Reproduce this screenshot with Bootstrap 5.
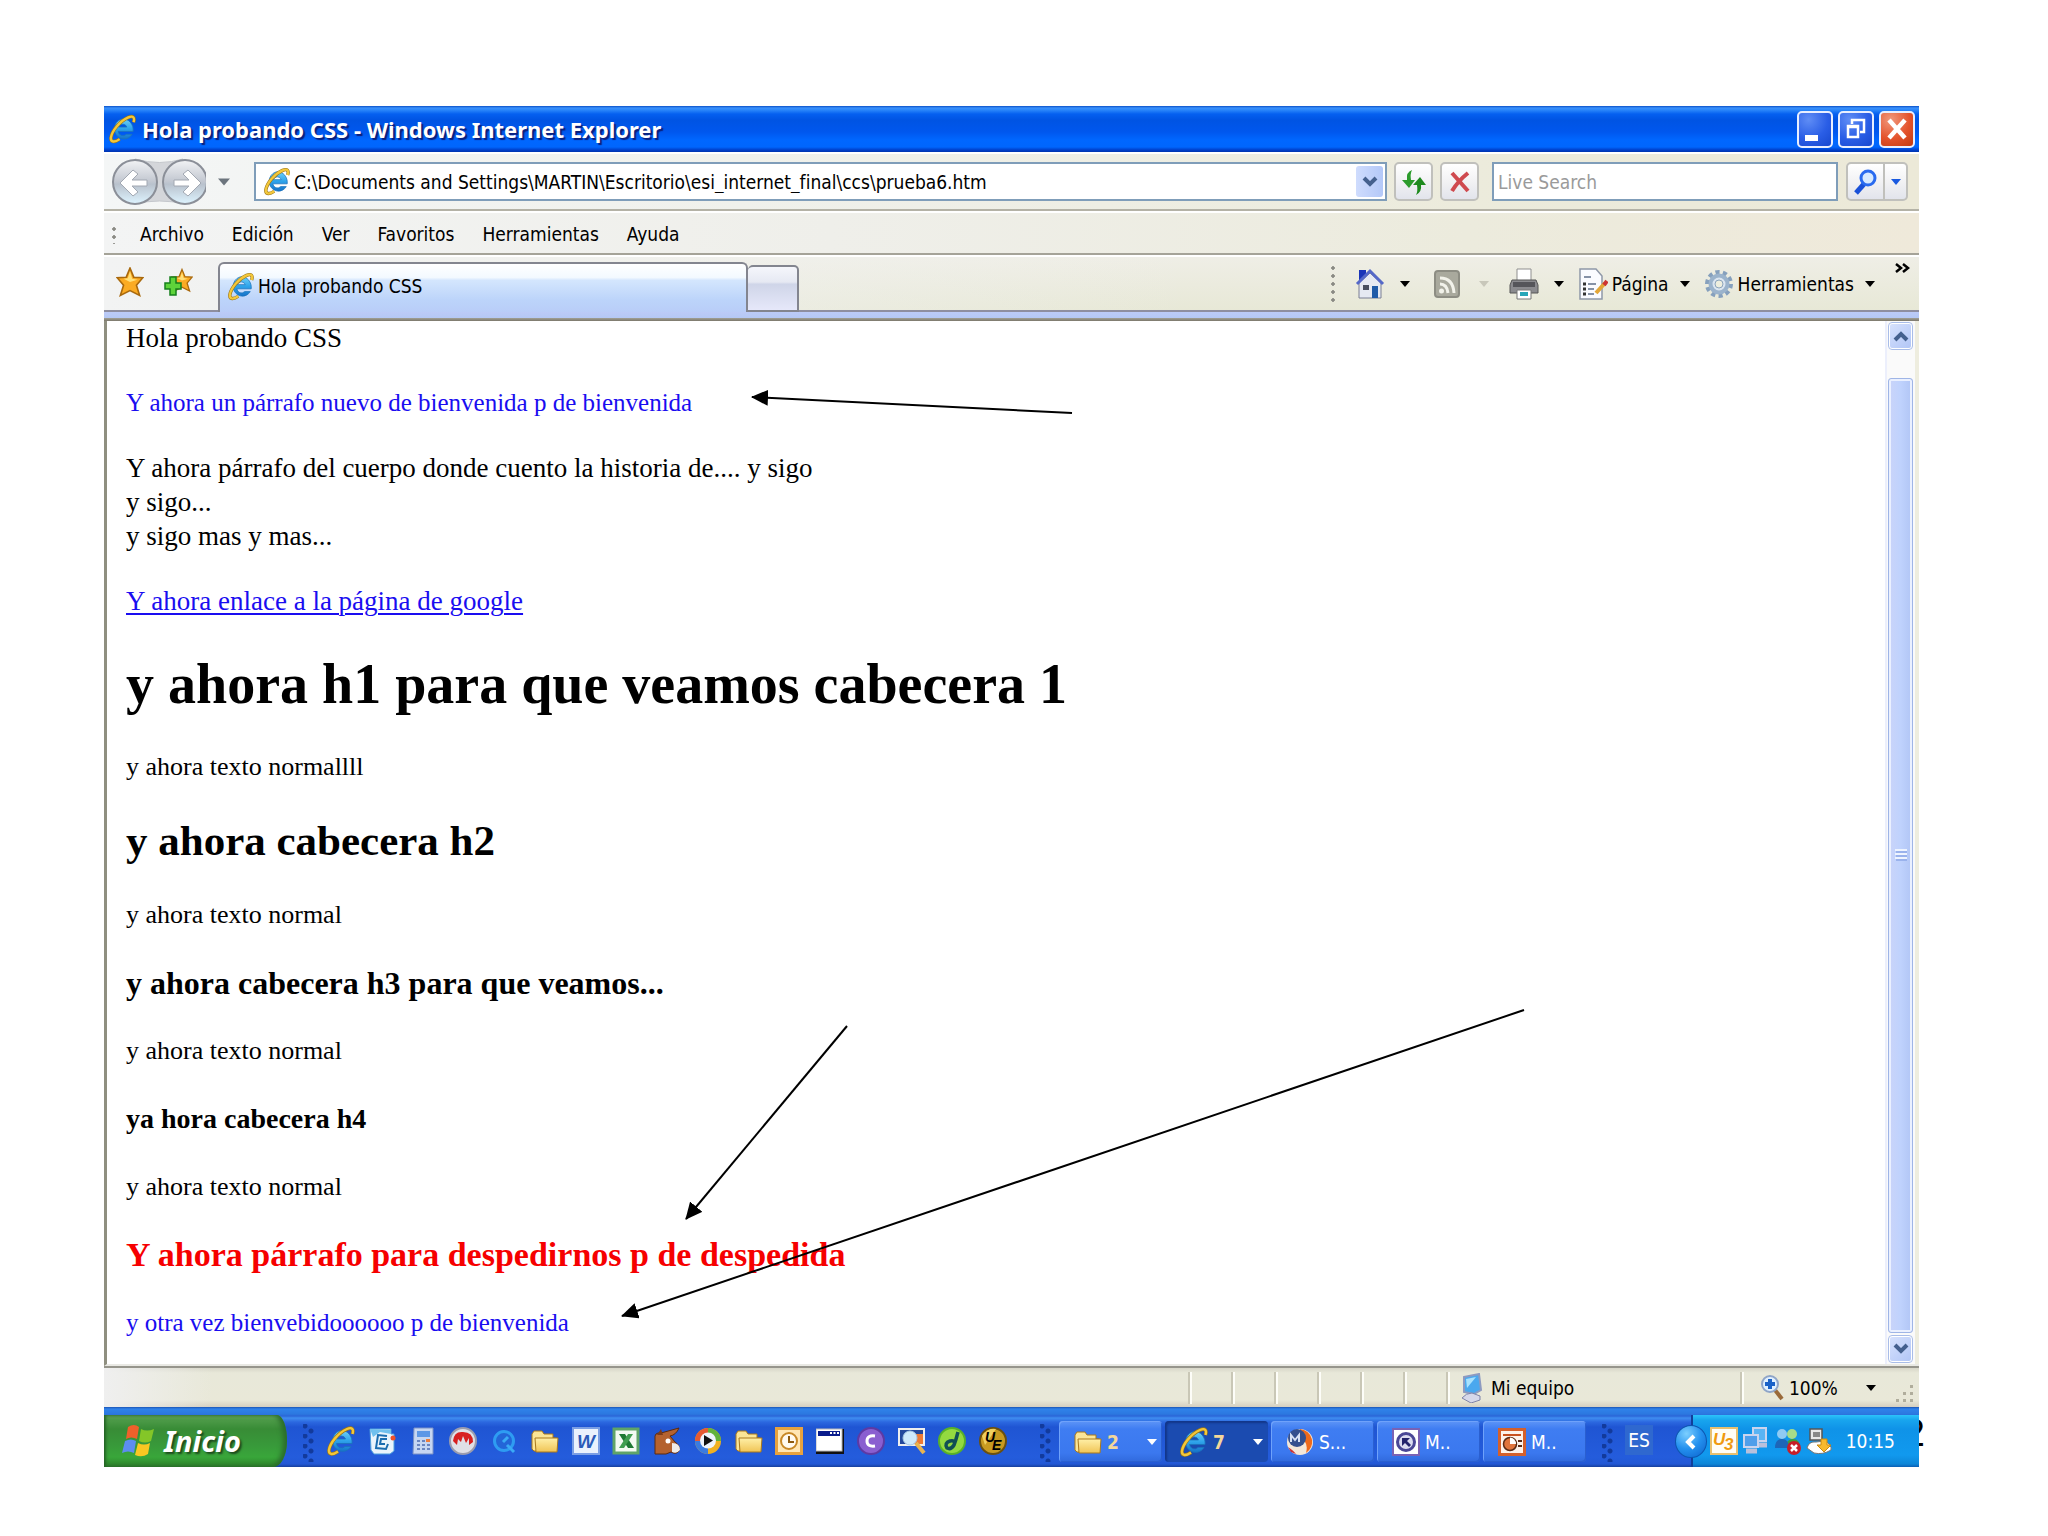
<!DOCTYPE html>
<html lang="es">
<head>
<meta charset="utf-8">
<meta name="viewport" content="width=device-width, initial-scale=1">
<title>Hola probando CSS</title>
<link href="https://cdn.jsdelivr.net/npm/bootstrap@5.3.0/dist/css/bootstrap.min.css" rel="stylesheet">
<style>
:root{--ui:"DejaVu Sans Condensed","DejaVu Sans",sans-serif;--serif:"Liberation Serif",serif}
body{background:#fff;color:#000;font:19px/24px var(--ui);padding:106px 129px 70px 104px;min-width:1400px}
button{font:inherit;color:inherit;padding:0;border:0;background:none;display:inline-flex;align-items:center;justify-content:center}
svg{display:block;flex:none}
.slide{position:relative}
.slide-no{position:absolute;right:-6px;bottom:12px;font:38px/44px "Liberation Sans",sans-serif}
.win{position:relative;background:#fff}
.titlebar{height:46px;padding:0 4px 0 5px;gap:6px;color:#fff;font:bold 22px/30px "Noto Sans",sans-serif;text-shadow:2px 2px 1px #0a1f7c;background:linear-gradient(#0a50c8 0,#3a90fb 2px,#2a86fa 4px,#0560f0 8px,#0054e3 14px,#0057ee 26px,#0067ff 34px,#0066fd 41px,#003fc9 44px,#0034b0 46px)}
.titlebar h1{font:inherit;margin:0}
.cap-btns{gap:5px}
.cap-btn{width:36px;height:37px;border:2px solid #e8efff;border-radius:5px;background:radial-gradient(circle at 30% 20%,#5f8df5,#2a5ee6 55%,#1748cf)}
.cap-btn.shut{background:radial-gradient(circle at 30% 20%,#f0987c,#e4532c 55%,#c23a10)}
.bar-addr{height:59px;padding:0 11px 0 7px;background:linear-gradient(90deg,#f4f6f6,#f0f1ec 35%,#ecebdc 75%,#ece9d8);border-top:2px solid #fff;border-bottom:2px solid #b4b2a6}
.nav-arrows{width:95px}
.recent{margin:0 24px 0 12px}
.fld{height:39px;border:2px solid #7f9db9;background:#fff}
.fld input{border:0;outline:0;background:transparent;font:inherit;color:#000;padding:0;min-width:0;height:32px}
.fld input::placeholder{color:#9a9a9a;opacity:1}
.drop{width:27px;height:31px;margin-right:2px;background:linear-gradient(90deg,#cfdcfd,#b3c8f8);border-radius:3px}
.tool-btn{height:39px;width:39px;border:2px solid #c0c0bc;border-radius:5px;background:linear-gradient(#fff,#f2f2f4 50%,#e2e4ec)}
.tool-btn.slim{width:23px}
.addr-acts{gap:7px;margin:0 13px 0 7px}
.find-box{width:346px}
.bar-menu{height:44px;padding:2px 0 0 8px;border-top:2px solid #fff;border-bottom:2px solid #a5a398;background:linear-gradient(90deg,#f3f4f4,#efefea 40%,#ecebdd 75%,#efe9da)}
.bar-menu a{color:#000;text-decoration:none;margin-right:28px}
.grip-dots{width:4px;background:radial-gradient(circle,#8a8a84 1.5px,transparent 2px) 0 0/4px 8px}
.bar-tabs{height:57px;border-top:2px solid #fff;background:linear-gradient(90deg,#f2f3f3,rgba(236,236,224,0) 60%),linear-gradient(#efeee6,#e7e8d6)}
.bar-tabs>.rule{border-bottom:2px solid #8e8ea0}
.favs{width:114px;gap:20px}
.tab-on{width:530px;margin-top:5px;padding:0 0 4px 8px;border:2px solid #83858f;border-bottom:0;border-radius:6px 6px 0 0;background:linear-gradient(#fff 0,#f3f9ff 28%,#d4e6fd 34%,#bcd4fa 75%,#b9cdf8)}
.tab-new{width:51px;margin-top:8px;border:2px solid #83858f;border-left:0;border-radius:5px 5px 0 0;background:linear-gradient(#f5f6fb 0,#e6e9f3 35%,#cfd5e8 40%,#e6e8fa)}
.cmds{gap:20px}
.cmds button{gap:15px}
.cmds .with-text{gap:11px;margin-left:-6px}
.band{height:9px;background:linear-gradient(#bccbf8,#b4c8f4 70%,#9c9a90 72%,#7b776a)}
.view{border-left:3px solid #8f8f80;border-bottom:2px solid #e9e9e4;position:relative;overflow:hidden}
.doc{padding:0 14px 24px 19px;font:26px/34px var(--serif)}
.doc>*{margin:0 0 31px;font-family:var(--serif);font-weight:400}
.doc>:last-child{margin-bottom:0}
.doc .t-body{font-size:27px}
.doc .t-hi{font-size:25px;color:#1a0df0}
.doc a{color:#1a0df0;text-decoration-thickness:2px;text-underline-offset:3px}
.doc h2{font-size:56px;line-height:70px;font-weight:700}
.doc h3{font-size:43px;line-height:52px;font-weight:700}
.doc h4{font-size:32px;line-height:40px;font-weight:700}
.doc h5{font-size:28px;line-height:40px;font-weight:700}
.doc .t-bye{font-size:34px;line-height:40px;font-weight:700;color:#f60000}
.marks{position:absolute;left:-3px;top:0;pointer-events:none}
.sbar{width:34px;padding:1px 6px 1px 1px;border-left:2px solid #eceffc;background:#fafafa;box-shadow:inset -4px 0 #eeeddf}
.sbtn{height:28px;border:2px solid #fff;outline:1px solid #a9bde8;outline-offset:-1px;border-radius:4px;background:linear-gradient(135deg,#d6e1fd,#b2c6f6)}
.thumb{margin:28px 0 2px;border:1px solid #9fb5e6;border-radius:3px;box-shadow:inset 0 0 0 2px #eaf0ff;background:linear-gradient(90deg,#cad4f9,#bfd2fd 50%,#b1c5f5)}
.statusbar{height:41px;border-top:2px solid #96958c;padding:4px 4px 3px 0;background:linear-gradient(90deg,#efefef,rgba(232,232,218,0) 6%),linear-gradient(#d7d6c8,#e8e8d9 5px,#e9e8d8 32px,#d5cfc0)}
.seg{width:42px;border-left:2px solid #c9c7b6;box-shadow:inset 2px 0 #fdfdf8;margin-right:1px}
.seg.zone{width:293px;padding-left:13px;gap:8px}
.seg.zoom{width:154px;padding-left:19px;gap:4px}
.taskbar{height:60px;color:#fff;background:linear-gradient(#1c55b5 0,#2f82ea 2px,#2c78e0 7px,#2b66d8 9px,#3f8df0 11px,#2c68e0 15px,#1f55d3 20px,#245cdc 50px,#2258d5 57px,#173f9c 60px)}
.start{width:183px;margin-top:8px;padding-left:17px;gap:9px;justify-content:flex-start;font:italic bold 29px/30px "Noto Sans",sans-serif;text-shadow:2px 2px 2px #1d4a1d;border-radius:0 10px 14px 0/0 26px 26px 0;background:linear-gradient(#6cab66 0,#4d9a48 5px,#388c36 14px,#38993a 30px,#39a63a 42px,#2b8029 52px);box-shadow:inset -4px 0 5px #2b6d2c,inset 2px 0 3px #256326}
.dots{width:11px;height:38px;margin-top:17px;background:radial-gradient(circle at 2px 2px,#123a9c 2px,transparent 3px) 0 0/11px 10px,radial-gradient(circle at 8px 7px,#123a9c 2px,transparent 3px) 0 0/11px 10px}
.quick{width:680px;margin:0 33px 0 13px;padding-top:7px}
.tasks{gap:3px}
.task{width:103px;height:41px;margin-top:14px;padding:0 5px 0 15px;justify-content:flex-start;gap:5px;border-radius:4px;background:linear-gradient(#5e95f7,#3f7df2 8px,#3b78ef 32px,#3069dc);box-shadow:inset 1px 1px #6fa2fa,inset -1px -1px #2a5fd0}
.task.on{background:#1b4bb0;box-shadow:inset 2px 2px 2px #12368a}
.task b{color:#f3d79a;font-weight:700}
.lang{width:28px;height:30px;margin:18px 0 0 4px;background:#2f68cf}
.tray{width:228px;margin-top:8px;padding:0 24px 0 17px;border-left:2px solid #123f9a;background:linear-gradient(#2cc3fa 0,#18a5ee 5px,#0f93e8 14px,#1199ee 40px,#0d86d8 49px,#0b5fb4)}
.chev{position:absolute;left:-18px;top:10px;width:32px;height:33px;border-radius:50%;border:1px solid #0d55b0;background:radial-gradient(circle at 35% 25%,#7ccfff,#2390ee 50%,#0c62cc)}
</style>
<script src="https://cdn.jsdelivr.net/npm/bootstrap@5.3.0/dist/js/bootstrap.bundle.min.js"></script>
</head>
<body>
<svg width="0" height="0" class="position-absolute" aria-hidden="true">
<defs>
<linearGradient id="gBlue" x1="0" y1="0" x2="0" y2="1"><stop offset="0" stop-color="#6fd0f8"/><stop offset=".5" stop-color="#2ea3ea"/><stop offset="1" stop-color="#1673c8"/></linearGradient>
<linearGradient id="gGold" x1="0" y1="0" x2="0" y2="1"><stop offset="0" stop-color="#fff0a8"/><stop offset="1" stop-color="#f0c455"/></linearGradient>
<linearGradient id="gNav" x1="0" y1="0" x2="0" y2="1"><stop offset="0" stop-color="#f2f3f5"/><stop offset=".48" stop-color="#c3c8d1"/><stop offset=".55" stop-color="#b9c2cd"/><stop offset="1" stop-color="#def4ff"/></linearGradient>
<marker id="head" markerUnits="userSpaceOnUse" markerWidth="18" markerHeight="18" refX="16" refY="8" orient="auto"><path d="M0 0L17 8L0 16Z"/></marker>
<symbol id="ie" viewBox="0 0 28 30">
<path d="M14 4.500A10 10.500 0 1 0 24 20.500H18A5 5 0 0 1 9.500 17.500H25A10.500 11.500 0 0 0 14 4.500ZM10 13A4.500 4.500 0 0 1 18.500 13Z" fill="url(#gBlue)" stroke="#1a72bb" stroke-width=".8"/>
<path d="M25.500 8C27 3 25 .8 20 3C11 7 3 17 2 24C1.500 29 6 29 11 25.500" fill="none" stroke="#9a7416" stroke-width="3.600"/>
<path d="M25.500 8C27 3 25 .8 20 3C11 7 3 17 2 24C1.500 29 6 29 11 25.500" fill="none" stroke="#f3c73a" stroke-width="2.400"/>
</symbol>
<symbol id="folder" viewBox="0 0 28 28"><path d="M1 22V7L3 4h8l2 3h9v4h3v13H3Z" fill="#fbe596" stroke="#a9781c"/><path d="M4 11h23l-1 14H5Z" fill="url(#gGold)" stroke="#a9781c"/></symbol>
<symbol id="car" viewBox="0 0 10 6"><path d="M0 0h10L5 6Z" fill="currentColor"/></symbol>
<symbol id="star" viewBox="0 0 26 28"><path d="M13 1l3.500 8.500L25 10l-6 7 3 9.500-9-4.500-9 4.500L7 17 1 10l8.500-.5Z" fill="#fbab23" stroke="#a9690d" stroke-width="1.500"/><path d="M13 4l2 7 5 1-7 2-6-3 4-.5Z" fill="#ffe07a"/></symbol>
</defs>
</svg>

<main class="slide">
<div class="slide-no">2</div>
<div class="win">

<header class="titlebar d-flex align-items-center">
<svg width="27" height="32"><use href="#ie"/></svg>
<h1 class="flex-grow-1">Hola probando CSS - Windows Internet Explorer</h1>
<div class="cap-btns d-flex">
<button class="cap-btn" aria-label="Minimizar"><svg width="28" height="28"><path d="M4 20h13v6H4Z" fill="#fff"/></svg></button>
<button class="cap-btn" aria-label="Restaurar"><svg width="28" height="28"><path d="M10 9V5h12v12h-4M9 5h14" fill="none" stroke="#fff" stroke-width="2.500"/><path d="M6 11h10v11H6ZM5 12h12" fill="none" stroke="#fff" stroke-width="2.500"/></svg></button>
<button class="cap-btn shut" aria-label="Cerrar"><svg width="28" height="28"><path d="M6 5L22 23M22 5L6 23" stroke="#fff" stroke-width="4.500"/></svg></button>
</div>
</header>

<div class="bar-addr d-flex align-items-center">
<svg class="nav-arrows" height="50" viewBox="0 0 95 50" role="img" aria-label="Atrás y adelante">
<path d="M24 2Q49 9 72 2L74 47Q48 41 24 47Z" fill="#d4d6da" stroke="#c4c7cc"/>
<g fill="url(#gNav)" stroke="#8b8f98" stroke-width="2"><circle cx="24" cy="25" r="22"/><circle cx="74" cy="25" r="22"/></g>
<g fill="#fff" stroke="#a2a8b2"><path d="M9 26L22 13l5 4-6 6h15v6H21l6 6-5 4Z"/><path d="M90 26L77 13l-5 4 6 6H63v6h15l-6 6 5 4Z"/></g>
</svg>
<button class="recent text-secondary" aria-label="Páginas recientes"><svg width="12" height="8"><use href="#car"/></svg></button>
<div class="fld d-flex align-items-center flex-grow-1 ps-1">
<svg class="ms-1 me-1" width="26" height="31"><use href="#ie"/></svg>
<input class="flex-grow-1" type="text" aria-label="Dirección" value="C:\Documents and Settings\MARTIN\Escritorio\esi_internet_final\ccs\prueba6.htm">
<button class="drop" aria-label="Mostrar direcciones"><svg width="16" height="12"><path d="M2 2l6 6 6-6" fill="none" stroke="#44608e" stroke-width="4"/></svg></button>
</div>
<div class="addr-acts d-flex">
<button class="tool-btn" aria-label="Actualizar"><svg width="28" height="30"><path d="M12 3Q6 5 7 13H2l7 8 6-8h-4Q10 7 12 3Z" fill="#2c9c2c"/><path d="M16 28Q22 25 21 18h5l-6-8-7 8h4Q18 24 16 28Z" fill="#1e8a1e"/></svg></button>
<button class="tool-btn" aria-label="Detener"><svg width="24" height="26"><path d="M4 4L20 22M20 4Q10 12 4 22" fill="none" stroke="#cf4a4f" stroke-width="4"/></svg></button>
</div>
<div class="fld find-box d-flex align-items-center ps-1"><input class="w-100" type="search" aria-label="Buscar" placeholder="Live Search"></div>
<div class="d-flex ms-2">
<button class="tool-btn rounded-end-0" aria-label="Buscar ahora"><svg width="28" height="28"><path d="M12 16L4 25" stroke="#1950d8" stroke-width="5"/><circle cx="16" cy="10" r="7" fill="#d8eaff" stroke="#2a6bef" stroke-width="3"/></svg></button>
<button class="tool-btn slim rounded-start-0 border-start-0" aria-label="Opciones de búsqueda"><svg width="10" height="6" color="#1a5ae0"><use href="#car"/></svg></button>
</div>
</div>

<nav class="bar-menu d-flex align-items-center">
<span class="grip-dots me-4 h-50"></span>
<a href="#">Archivo</a><a href="#">Edición</a><a href="#">Ver</a><a href="#">Favoritos</a><a href="#">Herramientas</a><a href="#">Ayuda</a>
</nav>

<div class="bar-tabs d-flex align-items-stretch">
<div class="favs rule d-flex align-items-center px-2 pb-1">
<button class="ms-1" aria-label="Favoritos"><svg width="28" height="30"><use href="#star"/></svg></button>
<button aria-label="Agregar a favoritos"><svg width="30" height="30"><svg x="7" width="22" height="27"><use href="#star"/></svg><path d="M6 10h6v6h5v6h-5v6H6v-6H1v-6h5Z" fill="#5ed33a" stroke="#16801c" stroke-width="1.500"/></svg></button>
</div>
<button class="tab-on justify-content-start gap-1"><svg width="26" height="31"><use href="#ie"/></svg>Hola probando CSS</button>
<button class="tab-new" aria-label="Nueva ficha"></button>
<div class="cmds rule d-flex align-items-center flex-grow-1 justify-content-end pe-2">
<span class="grip-dots h-75"></span>
<button aria-label="Inicio"><svg width="30" height="32" viewBox="0 0 30 32"><path d="M4 2h7v10H4Z" fill="#1a34b8"/><path d="M4 15L15 5l11 10v15H4Z" fill="#e6e9f2" stroke="#7a7f94"/><path d="M2 16L15 3l13 13" fill="none" stroke="#5568c8" stroke-width="3"/><path d="M17 18h6v12h-6Z" fill="#1f5aa8"/><path d="M8 17h6v5H8Z" fill="#4a4f60"/></svg><svg width="10" height="6"><use href="#car"/></svg></button>
<button aria-label="Fuentes" class="ms-1"><svg class="me-1" width="26" height="28"><rect x="1" y="1" width="24" height="26" rx="3" fill="#a9a99d" stroke="#8d8d83" stroke-width="2"/><path d="M6 8q13 0 14 15M6 14q7 0 8 9" fill="none" stroke="#f2f2ea" stroke-width="3"/><circle cx="7.500" cy="21" r="2.500" fill="#f2f2ea"/></svg><svg width="10" height="6" color="#c8c7ba"><use href="#car"/></svg></button>
<button aria-label="Imprimir"><svg width="30" height="32" viewBox="0 0 30 32"><path d="M8 1h14v12H8Z" fill="#fff" stroke="#8f8f8f"/><path d="M3 12h24l2 5v8H1v-8Z" fill="#8b8b8f" stroke="#555"/><path d="M4 14h22v5H4Z" fill="#55555a"/><path d="M8 22h14v9H8Z" fill="#fff" stroke="#777"/><path d="M11 24h8v4h-8Z" fill="#27a6b8"/></svg><svg width="10" height="6"><use href="#car"/></svg></button>
<button class="with-text"><span class="d-flex align-items-center gap-1"><svg width="30" height="32" viewBox="0 0 30 32"><path d="M2 1h16l6 7v23H2Z" fill="#fafbff" stroke="#8f98a8" stroke-width="1.500"/><path d="M6 9h7M10 16h8M10 21h6M10 26h6" stroke="#8591a6" stroke-width="2"/><path d="M5 16h3M5 21h3M5 26h3" stroke="#333" stroke-width="3"/><path d="M18 25l9-10" stroke="#e3a637" stroke-width="4"/><path d="M26 17l3-4" stroke="#c33" stroke-width="4"/></svg>Página</span><svg width="10" height="6"><use href="#car"/></svg></button>
<button class="with-text"><span class="d-flex align-items-center gap-1"><svg width="30" height="32" viewBox="-15 -16 30 32"><circle r="11.500" fill="none" stroke="#86a0bd" stroke-width="5" stroke-dasharray="4 3.200"/><circle r="8.500" fill="#dbe5f0" stroke="#9bb3cc" stroke-width="4"/><circle r="4" fill="#eeeede" stroke="#8ca4bc"/></svg>Herramientas</span><svg width="10" height="6"><use href="#car"/></svg></button>
<button class="align-self-start mt-1" aria-label="Más"><svg width="16" height="16"><path d="M1 3l5 4-5 4M8 3l5 4-5 4" fill="none" stroke="#000" stroke-width="2.500"/></svg></button>
</div>
</div>
<div class="band"></div>

<div class="view d-flex">
<article class="doc flex-grow-1">
<p class="t-body">Hola probando CSS</p>
<p class="t-hi">Y ahora un párrafo nuevo de bienvenida p de bienvenida</p>
<p class="t-body">Y ahora párrafo del cuerpo donde cuento la historia de.... y sigo<br>y sigo...<br>y sigo mas y mas...</p>
<p class="t-body"><a href="#">Y ahora enlace a la página de google</a></p>
<h2>y ahora h1 para que veamos cabecera 1</h2>
<p>y ahora texto normallll</p>
<h3>y ahora cabecera h2</h3>
<p>y ahora texto normal</p>
<h4>y ahora cabecera h3 para que veamos...</h4>
<p>y ahora texto normal</p>
<h5>ya hora cabecera h4</h5>
<p>y ahora texto normal</p>
<p class="t-bye">Y ahora párrafo para despedirnos p de despedida</p>
<p class="t-hi">y otra vez bienvebidoooooo p de bienvenida</p>
</article>
<svg class="marks" width="1440" height="1020" stroke="#000" stroke-width="2">
<path d="M968 92L648 76" marker-end="url(#head)"/><path d="M743 705L582 898" marker-end="url(#head)"/><path d="M1420 689L518 995" marker-end="url(#head)"/>
</svg>
<div class="sbar d-flex flex-column">
<button class="sbtn" aria-label="Subir"><svg width="16" height="12"><path d="M2 10l6-6 6 6" fill="none" stroke="#44608e" stroke-width="4"/></svg></button>
<div class="thumb flex-grow-1 d-flex align-items-center justify-content-center"><svg width="12" height="13"><path d="M0 1h12M0 5h12M0 9h12" stroke="#eef4ff" stroke-width="2"/><path d="M1 3h11M1 7h11M1 11h11" stroke="#8ea9e8" stroke-width="1.500"/></svg></div>
<button class="sbtn" aria-label="Bajar"><svg width="16" height="12"><path d="M2 2l6 6 6-6" fill="none" stroke="#44608e" stroke-width="4"/></svg></button>
</div>
</div>

<footer class="statusbar d-flex align-items-stretch">
<span class="flex-grow-1"></span>
<span class="seg"></span><span class="seg"></span><span class="seg"></span><span class="seg"></span><span class="seg"></span><span class="seg"></span>
<div class="seg zone d-flex align-items-center"><svg width="22" height="30" viewBox="0 0 22 30"><path d="M3 4L18 1l2 16-7 4-10-2Z" fill="#4aa8ee" stroke="#8d9ac0" stroke-width="2"/><path d="M5 6l10-2-9 11Z" fill="#a8e2fd"/><path d="M1 25q4-5 10-5l8 3v4l-9 3Z" fill="#d6d8ea" stroke="#7e83a8"/></svg>Mi equipo</div>
<div class="seg zoom d-flex align-items-center"><svg width="24" height="26" viewBox="0 0 24 26"><path d="M14 15l7 9" stroke="#9a6a3a" stroke-width="4"/><circle cx="9" cy="9" r="8" fill="#e0f0ff" stroke="#8fa5c8" stroke-width="2"/><path d="M9 4v10M4 9h10" stroke="#1a62c8" stroke-width="4"/></svg>100%<button class="ms-4" aria-label="Cambiar zoom"><svg width="10" height="6"><use href="#car"/></svg></button></div>
<svg class="align-self-end" width="20" height="20"><path d="M15 1h3v3h-3zM8 8h3v3H8zM15 8h3v3h-3zM1 15h3v3H1zM8 15h3v3H8zM15 15h3v3h-3z" fill="#b0ad9c"/></svg>
</footer>

<div class="taskbar d-flex align-items-stretch">
<button class="start"><svg width="34" height="34" viewBox="0 0 34 34"><path d="M7 3q6-4 11 0l-2 12q-6-3-11 0Z" fill="#f0602a"/><path d="M20 5q6 3 13 0l-3 12q-6 3-12 0Z" fill="#84c628"/><path d="M4 17q6-3 11 0l-2 12q-6-3-12 0Z" fill="#5c8df0"/><path d="M17 19q6 3 12 0l-2 11q-6 4-13 1Z" fill="#fac722"/></svg>Inicio</button>
<span class="dots ms-3"></span>
<div class="quick d-flex align-items-center justify-content-between">
<button aria-label="Internet Explorer"><svg width="28" height="30"><use href="#ie"/></svg></button>
<button aria-label="Escritorio"><svg width="28" height="28"><path d="M2 2h21v5h3v17l-4 3H6l-3-4Z" fill="#e9f4fc" stroke="#4fa0dc"/><path d="M2 2l21 1v4L12 5 5 10Z" fill="#6fc0ee"/><path d="M19 9l-9-1-2 13 10 1 2-5M19 12l-6 0-1 5 5 0" fill="none" stroke="#1a6db0" stroke-width="2"/><circle cx="25" cy="11" r="2.500" fill="#f0502a"/></svg></button>
<button aria-label="Calculadora"><svg width="28" height="28"><path d="M5 1h19v26H4Z" fill="#c6d6f2" stroke="#7a92c6"/><path d="M8 4h13v6H8Z" fill="#5d97e6"/><path d="M8 14h13M8 18h13M8 22h13" stroke="#6b86c0" stroke-width="2" stroke-dasharray="3 2"/><path d="M17 12h4v3h-4Z" fill="#ef7e3a"/></svg></button>
<button aria-label="Nero"><svg width="28" height="28"><circle cx="14" cy="14" r="13" fill="#dfe0e6" stroke="#9a9cae" stroke-width="2"/><path d="M4 14Q5 4 14 5q10 0 10 10l-4 3 0-7-3 5-3-7-2 6-3-3-1 6Z" fill="#d81f1f"/></svg></button>
<button aria-label="QuickTime"><svg width="28" height="28"><circle cx="14" cy="14" r="9.500" fill="#2365d8" stroke="#2e9cf2" stroke-width="3"/><path d="M17 18l7 7M13 15l5-5" stroke="#3aaaf6" stroke-width="3"/></svg></button>
<button aria-label="Carpeta"><svg width="28" height="28"><use href="#folder"/></svg></button>
<button aria-label="Word"><svg width="28" height="28"><rect x="1" y="1" width="26" height="26" fill="#eaf1fd" stroke="#7b9ee4" stroke-width="2"/><text x="14" y="21" text-anchor="middle" font-family="Liberation Sans,sans-serif" font-size="19" font-weight="700" font-style="italic" fill="#2b5ab8">W</text></svg></button>
<button aria-label="Excel"><svg width="28" height="28"><rect x="2" y="2" width="24" height="24" fill="#f2faf2" stroke="#5fa468" stroke-width="3"/><path d="M7 7h6l9 14h-6Z" fill="#1e7a34"/><path d="M21 7l-5 0-9 14h5Z" fill="#3f9e50"/></svg></button>
<button aria-label="eMule"><svg width="28" height="28"><path d="M2 27V12Q1 5 8 6L26 1q-3 7-9 8l5 6q6 4 4 9-3 4-8 1l-5 2Z" fill="#b4622f" stroke="#5a2a10"/><path d="M19 16q8 0 8 7-3 4-8 2Z" fill="#f0ece8"/><circle cx="15" cy="14" r="2.500" fill="#fff"/><path d="M4 8l4-6 2 6" fill="#7a3a18"/></svg></button>
<button aria-label="Reproductor"><svg width="28" height="28"><circle cx="14" cy="14" r="13" fill="#f0b020"/><path d="M14 14V1A13 13 0 0 0 1 14Z" fill="#e65a32"/><path d="M14 14V1A13 13 0 0 1 27 14Z" fill="#62b23c"/><path d="M14 14H1A13 13 0 0 0 14 27Z" fill="#3a7be0"/><circle cx="14" cy="13.500" r="8" fill="#eef4fb"/><path d="M10 8l9 5.500-9 5.500Z" fill="#111"/></svg></button>
<button aria-label="Carpeta 2"><svg width="28" height="28"><use href="#folder"/></svg></button>
<button aria-label="Outlook"><svg width="28" height="28"><rect x="1.500" y="1.500" width="25" height="25" fill="#ffe6b4" stroke="#e8a23e" stroke-width="3"/><circle cx="14" cy="14" r="8" fill="#fffaf0" stroke="#c88826" stroke-width="2"/><path d="M14 9v6h5" fill="none" stroke="#8d5a10" stroke-width="2"/></svg></button>
<button aria-label="Consola"><svg width="28" height="28"><rect width="28" height="25" y="2" fill="#111"/><rect x="0" y="2" width="26" height="22" fill="#fff" stroke="#b8b8b8"/><path d="M2 4h22v5H2Z" fill="#0a1c8c"/><path d="M14 6h9" stroke="#fff" stroke-width="2" stroke-dasharray="2 1.500"/></svg></button>
<button aria-label="C"><svg width="28" height="28"><circle cx="14" cy="14" r="13" fill="#8a5fd0" stroke="#5d3aa4" stroke-width="2"/><path d="M18 9q-8-1-8 5t8 5" fill="none" stroke="#fff" stroke-width="3"/></svg></button>
<button aria-label="Visor"><svg width="28" height="28"><rect x="1" y="2" width="25" height="16" fill="#24489c" stroke="#eee" stroke-width="2"/><path d="M16 7h9v10h-9Z" fill="#ee7a34"/><path d="M18 16l8 10" stroke="#e8b450" stroke-width="4"/><circle cx="12" cy="11" r="7" fill="#cfe9fb" stroke="#a8c8e4"/></svg></button>
<button aria-label="Dreamweaver"><svg width="28" height="28"><circle cx="14" cy="14" r="13" fill="#93d940" stroke="#58b02a" stroke-width="2"/><path d="M20 5q-2 8-4 13-3 5-7 3-3-5 3-7 4-1 5 2" fill="none" stroke="#104f54" stroke-width="3.500"/></svg></button>
<button aria-label="UltraEdit"><svg width="28" height="28"><circle cx="14" cy="14" r="13" fill="#c89a20" stroke="#6a5010" stroke-width="2"/><path d="M3 9A13 13 0 0 1 17 2L6 18Z" fill="#f0d060"/><text x="6" y="15" font-family="Liberation Sans,sans-serif" font-size="14" font-weight="700" font-style="italic">U</text><text x="13" y="23" font-family="Liberation Sans,sans-serif" font-size="14" font-weight="700" font-style="italic">E</text></svg></button>
</div>
<span class="dots"></span>
<div class="tasks d-flex ms-2">
<button class="task"><svg width="28" height="28"><use href="#folder"/></svg><b>2</b><svg class="ms-auto" width="10" height="6"><use href="#car"/></svg></button>
<button class="task on"><svg width="28" height="30"><use href="#ie"/></svg><b>7</b><svg class="ms-auto" width="10" height="6"><use href="#car"/></svg></button>
<button class="task"><svg width="28" height="28"><circle cx="14" cy="14" r="13" fill="#f4e7d8"/><path d="M14 1a13 13 0 0 1 6 24q3-12-6-14Z" fill="#ee6a1c"/><circle cx="11" cy="10" r="9" fill="#35508e"/><path d="M5 14V7l4 5 4-5v7" fill="none" stroke="#d8e2f4" stroke-width="2"/><path d="M2 19q6 4 8 7l-5-2Z" fill="#c33"/></svg>S...</button>
<button class="task"><svg width="28" height="28"><rect x="1" y="1" width="26" height="26" fill="#fff" stroke="#7a62b4" stroke-width="2"/><circle cx="14" cy="14" r="8.500" fill="#dcdcf0" stroke="#4a4796" stroke-width="3"/><path d="M10 10h8l-3 3 4 4-2 2-4-4-3 3Z" fill="#23236c"/></svg>M..</button>
<button class="task"><svg width="28" height="28"><rect x="1.500" y="1.500" width="25" height="25" fill="#fdf2ea" stroke="#d4602c" stroke-width="3"/><path d="M5 7h18" stroke="#c8501e" stroke-width="2"/><circle cx="12" cy="16" r="6.500" fill="#e0743c" stroke="#5a2a14" stroke-width="1.500"/><path d="M12 16V9.500A6.500 6.500 0 0 1 18 16Z" fill="#fff"/><path d="M20 13h4M20 18h4" stroke="#5a2a14" stroke-width="2"/></svg>M..</button>
</div>
<span class="dots ms-3"></span>
<div class="d-flex flex-grow-1 ms-2"><button class="lang">ES</button></div>
<div class="tray position-relative d-flex align-items-center gap-1">
<button class="chev" aria-label="Mostrar iconos"><svg width="16" height="18"><path d="M11 3L5 9l6 6" fill="none" stroke="#fff" stroke-width="4"/></svg></button>
<svg width="28" height="28"><rect x="1" y="1" width="26" height="26" fill="#fffdf6" stroke="#e8c070" stroke-width="2"/><text x="3" y="18" font-family="Liberation Sans,sans-serif" font-size="17" font-weight="700" font-style="italic" fill="#f09a10">U</text><text x="14" y="23" font-family="Liberation Sans,sans-serif" font-size="17" font-weight="700" font-style="italic" fill="#f09a10">3</text></svg>
<svg width="28" height="28"><path d="M11 1h13v13H11Z" fill="#5ab4f4" stroke="#cad4ee" stroke-width="2"/><path d="M2 8h14v12H2Z" fill="#4f9eea" stroke="#cad4ee" stroke-width="2"/><path d="M17 18h8M4 24h11" stroke="#b8c0dc" stroke-width="5"/></svg>
<svg width="28" height="28"><circle cx="18" cy="7" r="5" fill="#a6dc8a"/><path d="M12 21q0-9 7-9t7 9Z" fill="#3f9e3a"/><circle cx="8" cy="7" r="5" fill="#8fcbf4"/><path d="M1 21q0-9 7-9t7 9Z" fill="#1d66b8"/><circle cx="20" cy="21" r="7" fill="#c81e28"/><path d="M17 18l6 6M23 18l-6 6" stroke="#fff" stroke-width="2.500"/></svg>
<svg width="28" height="28"><path d="M4 2h12v11H4Z" fill="#e8e8e8" stroke="#555" stroke-width="1.500"/><path d="M7 5h7v5H7Z" fill="#888"/><path d="M1 21q2-7 9-6l9-1q7 4 6 9-8 5-17 3Z" fill="#fff" stroke="#777"/><path d="M15 12h6v6h4l-7 7-7-7h4Z" fill="#f7b92e" stroke="#c88a10"/></svg>
<span class="ms-auto">10:15</span>
</div>
</div>
</div>
</main>
</body>
</html>
